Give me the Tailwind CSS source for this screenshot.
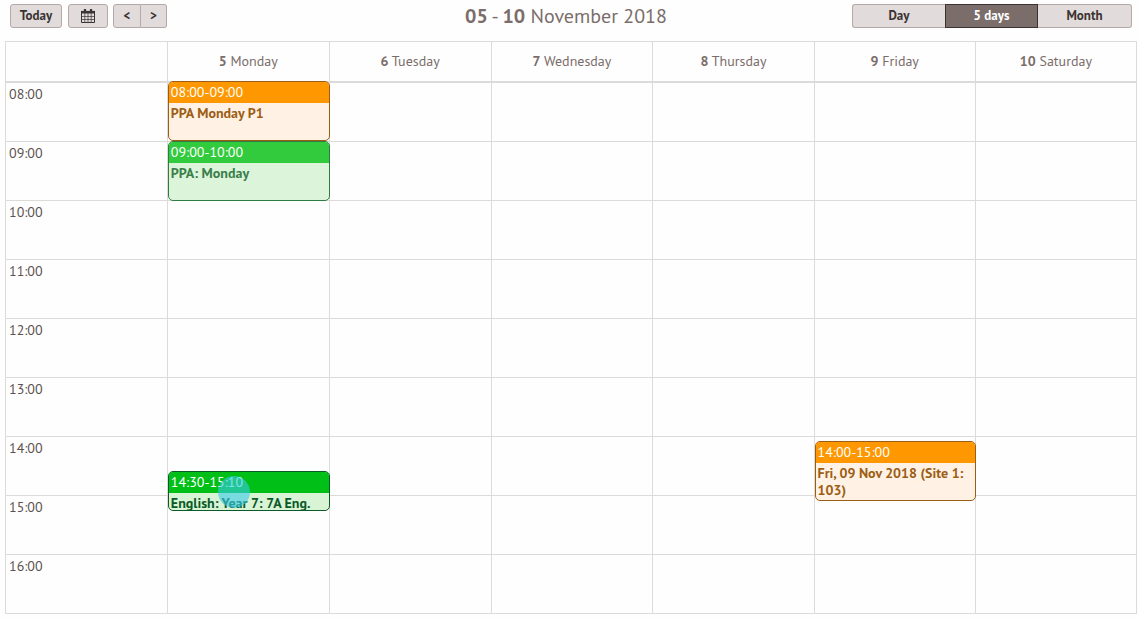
<!DOCTYPE html>
<html lang="en">
  <head>
    <meta charset="UTF-8" />
    <meta name="viewport" content="width=device-width, initial-scale=1.0" />
    <title>Calendar</title>
    <script src="https://cdn.jsdelivr.net/npm/@tailwindcss/browser@4"></script>
  </head>
  <body class="bg-[#fefefe] font-['PT_Sans','Noto_Sans',sans-serif] text-sm text-[#5d5250]">
    <header class="flex items-start pt-1 pr-[7px] pl-[10px] h-[41px] text-[13px] font-bold text-[#3b3332]">
      <div class="flex flex-1">
        <button class="w-[52px] h-6 rounded-[3px] border border-[#b5a9a7] bg-[#e1dcdb]">Today</button>
        <button aria-label="Pick a date" class="ml-[6px] flex w-10 h-6 items-center justify-center rounded-[3px] border border-[#b5a9a7] bg-[#e1dcdb]">
          <svg class="h-[14px] w-[14px]" viewBox="0 0 14 14" fill="none" stroke="currentColor">
            <path d="M.5 2.500v11h13v-11z" />
            <path d="M0 3.200h14" stroke-width="2.600" />
            <path d="M3.800 4v9.500M7 4v9.500M10.200 4v9.500M1 7.500h12M1 10.500h12" stroke-width=".7" />
            <path d="M4 0v3M10 0v3" stroke-width="2.200" />
          </svg>
        </button>
        <div class="ml-[5px] flex">
          <button aria-label="Previous" class="w-7 h-6 rounded-l-[3px] border border-[#b5a9a7] bg-[#e1dcdb]">&lt;</button>
          <button aria-label="Next" class="w-[26px] h-6 rounded-r-[3px] border border-l-0 border-[#b5a9a7] bg-[#e1dcdb]">&gt;</button>
        </div>
      </div>
      <h1 class="pr-[10px] text-xl leading-6 font-normal text-[#7b6d6a]"><b>05</b> - <b>10</b> November 2018</h1>
      <div class="flex flex-1 justify-end">
        <button class="w-[93px] h-6 rounded-l-[3px] border border-r-0 border-[#b5a9a7] bg-[#e1dcdb]">Day</button>
        <button class="w-[93px] h-6 border border-[#3b3332] bg-[#7b6d6a] text-white">5 days</button>
        <button class="w-[94px] h-6 rounded-r-[3px] border border-l-0 border-[#b5a9a7] bg-[#e1dcdb]">Month</button>
      </div>
    </header>

    <main class="pr-[2px] pl-[5px]">
      <table class="w-full table-fixed border-separate border-spacing-0 border-t border-l border-[#dddada] [&_tbody_td]:relative [&_tbody_td]:h-[59px] [&_tbody_td]:border-r [&_tbody_td]:border-b [&_tbody_td]:border-[#dddada] [&_tbody_td]:p-0 [&_tbody_th]:border-r [&_tbody_th]:border-b [&_tbody_th]:border-[#dddada] [&_tbody_th]:px-[3px] [&_tbody_th]:py-[2px] [&_tbody_th]:text-left [&_tbody_th]:align-top [&_tbody_th]:leading-[18px] [&_tbody_th]:font-normal">
        <colgroup>
          <col span="4" class="w-[14.31%]" />
          <col span="3" />
        </colgroup>
        <thead>
          <tr class="h-[41px] text-[#7b6d6a] [&>*]:border-r [&>*]:border-b-2 [&>*]:border-[#dddada] [&>*]:px-0 [&>*]:pt-0 [&>*]:pb-[2px] [&>*]:font-normal">
            <td></td>
            <th><b>5</b> Monday</th>
            <th><b>6</b> Tuesday</th>
            <th><b>7</b> Wednesday</th>
            <th><b>8</b> Thursday</th>
            <th><b>9</b> Friday</th>
            <th><b>10</b> Saturday</th>
          </tr>
        </thead>
        <tbody>
          <tr>
            <th>08:00</th>
            <td>
              <a href="#" class="absolute -top-[2px] -right-px left-0 h-[60px] overflow-hidden rounded-[5px] border border-[#9c5d14] bg-[#fff2e5] leading-[17px] font-bold text-[#9c5d14]">
                <span class="block h-[21px] bg-[#ff9800] px-[2px] leading-[21px] font-normal text-white">08:00-09:00</span>
                <span class="block px-[2px] pt-[2px]">PPA Monday P1</span>
              </a>
            </td>
            <td></td><td></td><td></td><td></td><td></td>
          </tr>
          <tr>
            <th>09:00</th>
            <td>
              <a href="#" class="absolute -top-px -right-px left-0 h-[60px] overflow-hidden rounded-[5px] border border-[#2f7c42] bg-[#dcf5da] leading-[17px] font-bold text-[#3a7f4a]">
                <span class="block h-[21px] bg-[#32cb3e] px-[2px] leading-[21px] font-normal text-white">09:00-10:00</span>
                <span class="block px-[2px] pt-[2px]">PPA: Monday</span>
              </a>
            </td>
            <td></td><td></td><td></td><td></td><td></td>
          </tr>
          <tr><th>10:00</th><td></td><td></td><td></td><td></td><td></td><td></td></tr>
          <tr><th>11:00</th><td></td><td></td><td></td><td></td><td></td><td></td></tr>
          <tr><th>12:00</th><td></td><td></td><td></td><td></td><td></td><td></td></tr>
          <tr><th>13:00</th><td></td><td></td><td></td><td></td><td></td><td></td></tr>
          <tr>
            <th>14:00</th>
            <td>
              <a href="#" class="absolute top-[34px] -right-px left-0 z-10 h-10 overflow-hidden rounded-[5px] border border-[#0a5a28] bg-[#d9f4d5] leading-[17px] font-bold text-[#0a5a28]">
                <span class="block h-[21px] bg-[#00c018] px-[2px] leading-[21px] font-normal text-white">14:30-15:10</span>
                <span class="block px-[2px] pt-[2px]">English: Year 7: 7A Eng.</span>
              </a>
              <!-- pointer highlight -->
              <div class="absolute top-[39px] left-[50px] z-20 h-8 w-8 rounded-full bg-[#35c9e8]/60"></div>
            </td>
            <td></td><td></td><td></td>
            <td>
              <a href="#" class="absolute top-1 -right-px left-0 z-10 h-[60px] overflow-hidden rounded-[5px] border border-[#9c5d14] bg-[#fff2e5] leading-[17px] font-bold text-[#9c5d14]">
                <span class="block h-[21px] bg-[#ff9800] px-[2px] leading-[21px] font-normal text-white">14:00-15:00</span>
                <span class="block px-[2px] pt-[2px]">Fri, 09 Nov 2018 (Site 1: 103)</span>
              </a>
            </td>
            <td></td>
          </tr>
          <tr><th>15:00</th><td></td><td></td><td></td><td></td><td></td><td></td></tr>
          <tr><th>16:00</th><td></td><td></td><td></td><td></td><td></td><td></td></tr>
        </tbody>
      </table>
    </main>
  </body>
</html>
